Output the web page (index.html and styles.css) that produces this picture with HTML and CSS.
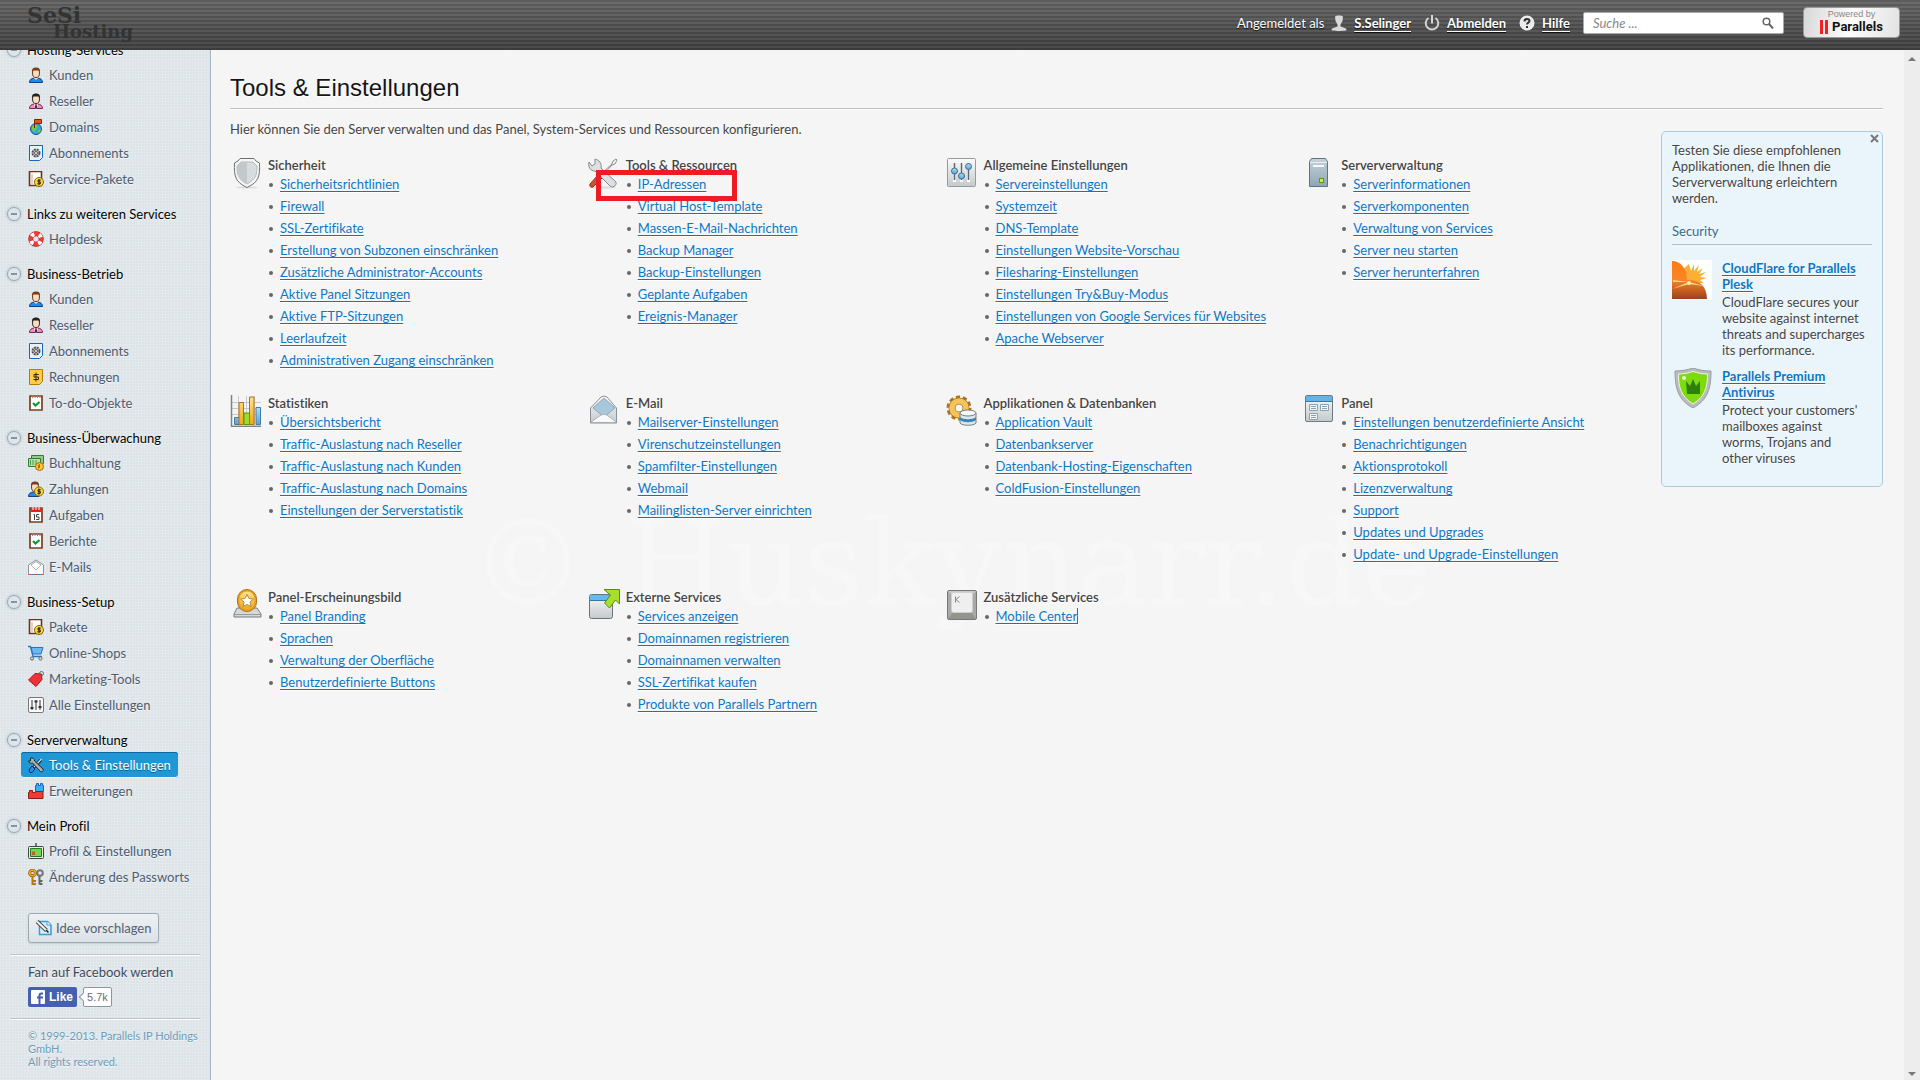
FILE: index.html
```html
<!DOCTYPE html>
<html lang="de">
<head>
    <meta charset="UTF-8">
    <meta name="viewport" content="width=device-width, initial-scale=1.0">
    <title>Tools &amp; Einstellungen</title>
    <link rel="stylesheet" href="styles.css">
</head>
<body>
    <!-- icon set -->
    <svg class="sprite" aria-hidden="true">
        <defs>
            <linearGradient id="silver" x1="0" y1="0" x2="0" y2="1"><stop offset="0" stop-color="#fbfbfb"/><stop offset="1" stop-color="#c3c9cc"/></linearGradient>
            <linearGradient id="gold" x1="0" y1="0" x2="0" y2="1"><stop offset="0" stop-color="#ffe28a"/><stop offset="1" stop-color="#f0a818"/></linearGradient>
            <linearGradient id="sky" x1="0" y1="0" x2="0" y2="1"><stop offset="0" stop-color="#b9ddf2"/><stop offset="1" stop-color="#5aa3cf"/></linearGradient>
            <linearGradient id="orange" x1="0" y1="0" x2="0" y2="1"><stop offset="0" stop-color="#ff7a10"/><stop offset="0.5" stop-color="#f9852a"/><stop offset="1" stop-color="#9c3f1c"/></linearGradient>
            <linearGradient id="steel" x1="0" y1="0" x2="0" y2="1"><stop offset="0" stop-color="#c5d3dc"/><stop offset="1" stop-color="#8fa5b5"/></linearGradient>
        </defs>
        <symbol id="user" viewBox="0 0 16 16">
            <path d="M1.5 15.5c0-3 2-4 4.500-4.500h4c2.500.5 4.500 1.500 4.500 4.500z" fill="#1c8cf0" stroke="#0b3f86"/>
            <path d="M6 9h4v2.500L8 13l-2-1.500z" fill="#f3c9a4"/>
            <ellipse cx="8" cy="6" rx="3.500" ry="4.500" fill="#fbdcc0" stroke="#6b3a1c"/>
            <path d="M4 5.500C3.500 1 6 .5 8 .5s4.500.5 4 5L11 3.500H5z" fill="#7a3d18"/>
        </symbol>
        <symbol id="reseller" viewBox="0 0 16 16">
            <path d="M1.500 15.500c0-3 2-4 4.500-4.500h4c2.500.5 4.500 1.500 4.500 4.500z" fill="#f48cc0" stroke="#7a2455"/>
            <path d="M6 9.500h4L9 15.500H7z" fill="#fff"/><path d="M7.500 11h1l.8 4.500H6.700z" fill="#3b2b33"/>
            <ellipse cx="8" cy="6" rx="3.500" ry="4.500" fill="#fbdcc0" stroke="#3a2a28"/>
            <path d="M4 5.500C3.500 1 6 .5 8 .5s4.500.5 4 5L11 3.500H5z" fill="#222"/>
        </symbol>
        <symbol id="globe" viewBox="0 0 16 16">
            <circle cx="8" cy="10" r="5.500" fill="#35a5e8" stroke="#1f4f92"/>
            <path d="M4 7l4-1.500L10 8l-2 2-1 3-3-2zM10 11l3-1-1 3-2 1z" fill="#6bcc3c"/>
            <path d="M6.500 9V.5h7v4h-7" fill="#e2541b" stroke="#7a2408"/>
        </symbol>
        <symbol id="subscription" viewBox="0 0 16 16">
            <path d="M1.500 .5h13v12l-3 3h-10z" fill="#e8f2fb" stroke="#1466c0"/>
            <circle cx="8" cy="8" r="3.500" fill="#ccc" stroke="#555" stroke-width="2" stroke-dasharray="2 .8"/>
            <circle cx="8" cy="8" r="1.500" fill="#fff" stroke="#555"/>
        </symbol>
        <symbol id="package" viewBox="0 0 16 16">
            <path d="M1.500 .5h12v14h-12z" fill="#fff" stroke="#6b3414" stroke-width="1.600"/>
            <path d="M4 3v10" stroke="#cfa78c"/>
            <circle cx="11" cy="11" r="4.500" fill="#ffd93b" stroke="#8a6208"/>
            <path d="M12.800 9.200H10v1.700h2.300v1.900H9.300M11 8v6.200" fill="none" stroke="#222"/>
        </symbol>
        <symbol id="help-ring" viewBox="0 0 16 16">
            <circle cx="8" cy="8" r="5.200" fill="none" stroke="#8b2323" stroke-width="5"/>
            <circle cx="8" cy="8" r="5.200" fill="none" stroke="#f33a34" stroke-width="4"/>
            <circle cx="8" cy="8" r="5.200" fill="none" stroke="#fff" stroke-width="4" stroke-dasharray="3.200 4.970" stroke-dashoffset="-2.500"/>
        </symbol>
        <symbol id="invoice" viewBox="0 0 16 16">
            <path d="M1.500 .5h13v12l-3 3h-10z" fill="#ffcb4a" stroke="#b97a0c"/>
            <path d="M10.800 5.500H6v2.500h4.500v2.500H5.500M8 3.500v9" fill="none" stroke="#3b2400"/>
        </symbol>
        <symbol id="todo" viewBox="0 0 16 16">
            <path d="M2 1h12v14H2z" fill="#fff" stroke="#7a3f20" stroke-width="1.700"/>
            <path d="M4.500 0v3m2.500-3v3m2.500-3v3M12 0v3" stroke="#a07a64"/>
            <path d="M5 8l2.500 2.500L11.500 7" fill="none" stroke="#0b9a31" stroke-width="2.200"/>
        </symbol>
        <symbol id="money" viewBox="0 0 16 16">
            <path d="M3.500 .5h12v8h-12z" fill="#8fcb86" stroke="#2e7d32"/><path d="M.5 3.500h12v8H.5z" fill="#b5e0a6" stroke="#2e7d32"/>
            <path d="M5 5v5m3-5v5M2.500 5v5" stroke="#4b9a4c"/>
            <circle cx="11.500" cy="11.500" r="4" fill="#ffc933" stroke="#b3600a"/><path d="M10.500 13.500V10l1-.8V13" stroke="#c46810" fill="none"/>
        </symbol>
        <symbol id="payer" viewBox="0 0 16 16">
            <path d="M.5 15.500c0-3 2-4 4.500-4.500h4l2 4.500z" fill="#1c8cf0" stroke="#0b3f86"/>
            <ellipse cx="7" cy="6" rx="3.500" ry="4.500" fill="#fbdcc0" stroke="#6b3a1c"/>
            <path d="M3 5.500C2.500 1 5 .5 7 .5s4.500.5 4 5L10 3.500H4z" fill="#7a3d18"/>
            <circle cx="11" cy="10.500" r="4.500" fill="#ffd93b" stroke="#8a6208"/>
            <path d="M12.800 8.700H10v1.700h2.300v1.900H9.300M11 7.500v6.200" fill="none" stroke="#222"/>
        </symbol>
        <symbol id="calendar" viewBox="0 0 16 16">
            <path d="M2 1h12v14H2z" fill="#fff" stroke="#7a3f20" stroke-width="1.700"/>
            <path d="M2.800 1.500h10.400v3.500H2.800z" fill="#ef1d1d"/>
            <path d="M5 0v3m3-3v3m3-3v3" stroke="#fff"/>
            <path d="M5.500 7.500h1V13M11 7.500H8.500V10H11v2.500H8.200" fill="none" stroke="#444"/>
        </symbol>
        <symbol id="mail" viewBox="0 0 16 16">
            <path d="M.5 6L8 1l7.500 5v9.500H.5z" fill="#fbfbfb" stroke="#8b939c"/>
            <path d="M3 6l5-3.500L13 6l-5 5z" fill="#fff" stroke="#aab0b6"/>
            <path d="M.5 15.500h15" stroke="#d84c4c" stroke-dasharray="3 3"/><path d="M3.500 15.500h12" stroke="#3d79c8" stroke-dasharray="3 3"/>
        </symbol>
        <symbol id="cart" viewBox="0 0 16 16">
            <path d="M3 2.500h12L13 9H4.500z" fill="#67b9f2" stroke="#2273c2"/>
            <path d="M0 1.500h2.500L5 11.500h9" fill="none" stroke="#2a76bd" stroke-width="1.300"/>
            <circle cx="4" cy="13.500" r="1.600" fill="#ddd" stroke="#666"/><circle cx="12.500" cy="13.500" r="1.600" fill="#ddd" stroke="#666"/>
        </symbol>
        <symbol id="tag" viewBox="0 0 16 16">
            <path d="M.5 9L7 2.500l6.500.5.5 5.500L8 15.500z" fill="#ee3338" stroke="#a8181f"/>
            <circle cx="13.500" cy="2.500" r="2" fill="none" stroke="#666"/>
        </symbol>
        <symbol id="sliders" viewBox="0 0 16 16">
            <rect x=".5" y=".5" width="15" height="15" rx="1.500" fill="#fafafa" stroke="#777"/>
            <path d="M4 3v10M8 3v10M12 3v10" stroke="#333"/>
            <path d="M2.500 11h3M6.500 4.500h3M10.500 10h3" stroke="#333" stroke-width="2"/>
        </symbol>
        <symbol id="tools" viewBox="0 0 16 16">
            <path d="M5 11L13 3" stroke="#123" stroke-width="3"/><path d="M6 10L13.500 2" stroke="#dfe6ea" stroke-width="1.200"/>
            <path d="M1 13l3-4 3 3-3 3.500H2z" fill="#2b8af0" stroke="#0b2b5c"/>
            <path d="M2.500 1v3H.5C1 6 3 7 4.500 6L12 14c1.500 2 4 0 3-2L6.500 4C7 2 5 .5 2.500 1z" fill="#a9b0b6" stroke="#1d2a33"/>
        </symbol>
        <symbol id="bricks" viewBox="0 0 16 16">
            <path d="M7.500 8.500v-6h1v-2h2v2h2v-2h2v2h1v6z" fill="#35b1f5" stroke="#1568b8"/>
            <path d="M.5 15.500v-6h1v-2h3v2h3v-1H15v7z" fill="#ef3b35" stroke="#941a18"/>
        </symbol>
        <symbol id="profile" viewBox="0 0 16 16">
            <path d="M7 0h2v4H7z" fill="#777"/><rect x=".5" y="3.500" width="15" height="12" rx="1" fill="#e9efe6" stroke="#444"/>
            <path d="M2.500 5.500h11v8h-11z" fill="#74d74d" stroke="#237a1e"/><path d="M4 12V8.500h3V12z" fill="#c45a37"/>
        </symbol>
        <symbol id="keys" viewBox="0 0 16 16">
            <circle cx="12" cy="4" r="2.800" fill="none" stroke="#777" stroke-width="2"/><path d="M11.500 7v8.500M11.500 12h3m-3 3h3" stroke="#666" stroke-width="2"/>
            <circle cx="4.500" cy="4" r="2.800" fill="none" stroke="#8a5208" stroke-width="3"/><circle cx="4.500" cy="4" r="2.800" fill="none" stroke="#e9a623" stroke-width="1.800"/>
            <path d="M4.500 7v9M5 12h3M5 15h3" stroke="#b8770f" stroke-width="2"/>
        </symbol>
        <symbol id="idea" viewBox="0 0 16 16">
            <path d="M3.500 1.500h8l3.500 3.500v9.500H3.500z" fill="#d7efff" stroke="#3b9bd4" stroke-width="1.500"/><path d="M11 1.500V5h4" fill="#fff" stroke="#3b9bd4"/>
            <path d="M1 1.500l9.500 9" stroke="#444" stroke-width="4"/><path d="M1 1.500l9.500 9" stroke="#eee" stroke-width="2.200"/><path d="M10 10l2.500 2.500" stroke="#222" stroke-width="1.500"/>
        </symbol>
        <symbol id="shield" viewBox="0 0 32 32">
            <ellipse cx="17" cy="30.500" rx="11" ry="1" fill="#ddd"/>
            <path d="M17 1.500h7l2 2.500 3.500 2C30 19 29 25 17 30.500 5 25 4 19 4.500 6L8 4l2-2.500z" fill="#f4f6f6" stroke="#6d7172"/>
            <path d="M17 5h6l4 4c0 9-1 13-10 18C8 22 7 18 7 9l4-4z" fill="#d8dcdd" stroke="#b5babb"/><path d="M17 5v22C8 22 7 18 7 9l4-4z" fill="#c3c8ca"/>
        </symbol>
        <symbol id="big-tools" viewBox="0 0 32 32">
            <ellipse cx="15" cy="30.500" rx="13" ry="1" fill="#ddd"/>
            <path d="M12 18L24 7l1-3 3-2 1 1-2 4-3 1L13 20z" fill="#f5f5f5" stroke="#8a8f91"/>
            <path d="M2 27l8-9 4 3-9 9c-2 1-4-1-3-3z" fill="#c85430" stroke="#8b3419"/>
            <path d="M7 2v5l-3 2-3-4c-1 5 1 9 6 9l14 14c3 4 8 1 7-3L13 11c1-5-2-8-6-9z" fill="#dce0e2" stroke="#858b8e"/>
        </symbol>
        <symbol id="mixer" viewBox="0 0 32 32">
            <rect x="1.500" y="1.500" width="28" height="28" rx="1" fill="url(#silver)" stroke="#969b9e"/>
            <path d="M8.500 6v19M15.500 6v19M22.500 6v19" stroke="#fff" stroke-width="3"/><path d="M8.500 6v17M15.500 6v17M22.500 6v17" stroke="#5d646a" stroke-width="1.600"/>
            <circle cx="8.500" cy="14" r="3" fill="url(#sky)" stroke="#3a6f94"/><circle cx="15.500" cy="19" r="3" fill="url(#sky)" stroke="#3a6f94"/><circle cx="22.500" cy="9.500" r="3" fill="url(#sky)" stroke="#3a6f94"/>
        </symbol>
        <symbol id="server" viewBox="0 0 32 32">
            <path d="M6.500 4.500l2-3h14l2 3v25h-18z" fill="url(#steel)" stroke="#5d7485"/><path d="M7 5.500h17" stroke="#e9f0f4"/>
            <path d="M10 9h11" stroke="#f6fafc" stroke-width="2"/><rect x="16.500" y="21.500" width="4" height="4" fill="#c8f24a" stroke="#5b9c0c"/>
        </symbol>
        <symbol id="chart" viewBox="0 0 32 32">
            <path d="M1.500 1v30H31M1 7.500h30M1 13.500h30M1 19.500h30M8.500 1v30M16.500 1v30M24.500 1v30" fill="none" stroke="#c4c9cc"/><path d="M1.500 0v31.500H31" fill="none" stroke="#7d8488" stroke-width="1.500"/>
            <path d="M4.500 22.500h5v7h-5zM26 12.500h4.500v17H26z" fill="url(#sky)" stroke="#3d7fa8"/><path d="M14 18h6v11.500h-6z" fill="#9bdc2c" stroke="#5c9415"/>
            <path d="M9 7.500h4.500v22H9zM19.500 2H24v27.500h-4.500z" fill="url(#gold)" stroke="#b5701a"/>
        </symbol>
        <symbol id="big-mail" viewBox="0 0 32 32">
            <path d="M2.500 13L13 2q3-2 6 0l9.500 11v15h-26z" fill="url(#silver)" stroke="#8b9196"/>
            <path d="M5 13L16 3l11 10-11 9z" fill="#a9c7db" stroke="#87a8bf"/><path d="M3 27l10-7q3-1.500 6 0l9 7" fill="#f9f9f9" stroke="#aab0b4"/>
        </symbol>
        <symbol id="gear-db" viewBox="0 0 32 32">
            <circle cx="13" cy="13" r="10.500" fill="none" stroke="#a77420" stroke-width="4" stroke-dasharray="4 2.600"/>
            <circle cx="13" cy="13" r="7" fill="none" stroke="#a77420" stroke-width="7"/><circle cx="13" cy="13" r="7" fill="none" stroke="#f3c35c" stroke-width="5.500"/>
            <path d="M14 18v10c2 3 14 3 16 0V18z" fill="#dfe6ea" stroke="#767f86"/><path d="M14 22c3 3 13 3 16 0v3c-3 3-13 3-16 0z" fill="#3c86b5"/>
            <ellipse cx="22" cy="18" rx="8" ry="3" fill="#f5f7f8" stroke="#767f86"/>
        </symbol>
        <symbol id="panel" viewBox="0 0 32 32">
            <rect x="2.500" y=".5" width="27" height="26" rx="1.500" fill="url(#silver)" stroke="#697a85"/><path d="M3 1h26v5H3z" fill="#62b4e8"/><path d="M3 6.500h26" stroke="#357ca8"/>
            <path d="M6.500 9.500h8v6h-8zM17.500 9.500h8v6h-8zM6.500 18.500h8v6h-8z" fill="#f2f6f8" stroke="#8ca1ad"/><path d="M8 11.500h5m-5 2h5m6-2h5m-5 2h5m-16 7h5m-5 2h5" stroke="#8ca1ad"/>
        </symbol>
        <symbol id="award" viewBox="0 0 32 32">
            <path d="M7 19h20l4 6v3H4v-3z" fill="#d5d8da" stroke="#777d80"/><path d="M4 25.500h27" stroke="#999"/>
            <rect x="7.500" y=".5" width="19" height="22" rx="9.500" fill="#e4a12a" stroke="#ae731b"/><rect x="9.500" y="2.500" width="15" height="18" rx="7.500" fill="url(#gold)"/>
            <path d="M17 5.500l2 4 4.500.5-3.500 3 1 4.500-4-2-4 2 1-4.500-3.500-3 4.500-.5z" fill="#fff" stroke="#b98b3c"/>
        </symbol>
        <symbol id="external" viewBox="0 0 32 32">
            <rect x="1.500" y="5.500" width="23" height="24" rx="2" fill="url(#silver)" stroke="#69757d"/><path d="M2 6h22v5H2z" fill="#66b8ee"/><path d="M2 11.500h22" stroke="#2f78aa"/>
            <path d="M16 .5h15.500V15l-4-4-6 8-5-5 6-8z" fill="#a6e02c" stroke="#5c8a12"/>
        </symbol>
        <symbol id="key" viewBox="0 0 32 32">
            <rect x="1.500" y="1.500" width="29" height="29" rx="1.500" fill="#a9a9a9" stroke="#777"/><path d="M2 2h28l-4 4H6z" fill="#c9c9c9"/><path d="M2 30l5-7h18l5 7z" fill="#94948c"/>
            <rect x="5.500" y="3.500" width="21" height="20" rx="2" fill="#efefef" stroke="#d0d0d0"/><path d="M9.500 7.500v6m4-6l-3.500 3 3.500 3" fill="none" stroke="#888"/>
        </symbol>
    </svg>

    <header class="topbar">
        <div class="logo">
            <span class="logo-main">SeSi</span>
            <span class="logo-sub">Hosting</span>
        </div>
        <div class="account">
            <span>Angemeldet als</span>
            <svg class="icon" viewBox="0 0 16 16"><path d="M4 1.500C5 0 11 0 12 1.500L11.500 6 9.500 9.500v2l5.500 2c1.500 2-.5 2.500-7 2.500S-.5 15.500 1 13.500l5.500-2v-2L4.500 6z" fill="#d9d9d9"/></svg>
            <a href="#">S.Selinger</a>
            <svg class="icon" viewBox="0 0 16 16"><path d="M4.500 3A6.300 6.300 0 1 0 11.500 3M8 0v8.500" fill="none" stroke="#d5d5d5" stroke-width="2"/></svg>
            <a href="#">Abmelden</a>
            <svg class="icon" viewBox="0 0 16 16"><circle cx="8" cy="8" r="7.500" fill="#ececec"/><path d="M5.500 6.500c0-3.500 5-3 5-.5 0 1.500-2.500 1.700-2.500 3.500M8 11v2" fill="none" stroke="#333" stroke-width="2"/></svg>
            <a href="#">Hilfe</a>
        </div>
        <form class="search">
            <input type="search" placeholder="Suche ..." aria-label="Suche">
            <button type="button" aria-label="Suchen">
                <svg viewBox="0 0 12 12"><circle cx="4.500" cy="4.500" r="3.300" fill="none" stroke="#666" stroke-width="1.500"/><path d="M7 7l4 4.500" stroke="#666" stroke-width="2"/></svg>
            </button>
        </form>
        <a class="powered" href="#">
            <span class="powered-by">Powered by</span>
            <span class="parallels"><i></i><i></i><b>Parallels</b></span>
        </a>
    </header>

    <div class="page">
        <nav class="sidebar">
            <div class="sidebar-inner">
                <section>
                    <h2><button type="button" aria-label="Einklappen"></button>Hosting-Services</h2>
                    <a href="#"><svg><use href="#user"/></svg>Kunden</a>
                    <a href="#"><svg><use href="#reseller"/></svg>Reseller</a>
                    <a href="#"><svg><use href="#globe"/></svg>Domains</a>
                    <a href="#"><svg><use href="#subscription"/></svg>Abonnements</a>
                    <a href="#"><svg><use href="#package"/></svg>Service-Pakete</a>
                </section>
                <section>
                    <h2><button type="button" aria-label="Einklappen"></button>Links zu weiteren Services</h2>
                    <a href="#"><svg><use href="#help-ring"/></svg>Helpdesk</a>
                </section>
                <section>
                    <h2><button type="button" aria-label="Einklappen"></button>Business-Betrieb</h2>
                    <a href="#"><svg><use href="#user"/></svg>Kunden</a>
                    <a href="#"><svg><use href="#reseller"/></svg>Reseller</a>
                    <a href="#"><svg><use href="#subscription"/></svg>Abonnements</a>
                    <a href="#"><svg><use href="#invoice"/></svg>Rechnungen</a>
                    <a href="#"><svg><use href="#todo"/></svg>To-do-Objekte</a>
                </section>
                <section>
                    <h2><button type="button" aria-label="Einklappen"></button>Business-Überwachung</h2>
                    <a href="#"><svg><use href="#money"/></svg>Buchhaltung</a>
                    <a href="#"><svg><use href="#payer"/></svg>Zahlungen</a>
                    <a href="#"><svg><use href="#calendar"/></svg>Aufgaben</a>
                    <a href="#"><svg><use href="#todo"/></svg>Berichte</a>
                    <a href="#"><svg><use href="#mail"/></svg>E-Mails</a>
                </section>
                <section>
                    <h2><button type="button" aria-label="Einklappen"></button>Business-Setup</h2>
                    <a href="#"><svg><use href="#package"/></svg>Pakete</a>
                    <a href="#"><svg><use href="#cart"/></svg>Online-Shops</a>
                    <a href="#"><svg><use href="#tag"/></svg>Marketing-Tools</a>
                    <a href="#"><svg><use href="#sliders"/></svg>Alle Einstellungen</a>
                </section>
                <section>
                    <h2><button type="button" aria-label="Einklappen"></button>Serververwaltung</h2>
                    <a href="#" class="active"><svg><use href="#tools"/></svg>Tools &amp; Einstellungen</a>
                    <a href="#"><svg><use href="#bricks"/></svg>Erweiterungen</a>
                </section>
                <section>
                    <h2><button type="button" aria-label="Einklappen"></button>Mein Profil</h2>
                    <a href="#"><svg><use href="#profile"/></svg>Profil &amp; Einstellungen</a>
                    <a href="#"><svg><use href="#keys"/></svg>Änderung des Passworts</a>
                </section>
                <button type="button" class="idea"><svg><use href="#idea"/></svg>Idee vorschlagen</button>
                <div class="facebook">
                    <p>Fan auf Facebook werden</p>
                    <div class="like-row">
                        <button type="button" class="like"><svg viewBox="0 0 14 14"><rect width="14" height="14" rx="1" fill="#fff"/><path d="M8.500 14V5.500q0-2 2-2H12M6 7.500h6" fill="none" stroke="#4560b0" stroke-width="2"/></svg>Like</button>
                        <span class="like-count">5.7k</span>
                    </div>
                </div>
                <p class="copyright">© 1999-2013. Parallels IP Holdings GmbH.<br>All rights reserved.</p>
            </div>
        </nav>

        <main class="content">
            <div class="watermark" aria-hidden="true">© Huskynarr.de</div>
            <h1>Tools &amp; Einstellungen</h1>
            <p class="intro">Hier können Sie den Server verwalten und das Panel, System-Services und Ressourcen konfigurieren.</p>
            <div class="columns">
                <div class="tools-grid">
                    <section class="tool">
                        <svg><use href="#shield"/></svg>
                        <div>
                            <h3>Sicherheit</h3>
                            <ul>
                                <li><a href="#">Sicherheitsrichtlinien</a></li>
                                <li><a href="#">Firewall</a></li>
                                <li><a href="#">SSL-Zertifikate</a></li>
                                <li><a href="#">Erstellung von Subzonen einschränken</a></li>
                                <li><a href="#">Zusätzliche Administrator-Accounts</a></li>
                                <li><a href="#">Aktive Panel Sitzungen</a></li>
                                <li><a href="#">Aktive FTP-Sitzungen</a></li>
                                <li><a href="#">Leerlaufzeit</a></li>
                                <li><a href="#">Administrativen Zugang einschränken</a></li>
                            </ul>
                        </div>
                    </section>
                    <section class="tool">
                        <svg><use href="#big-tools"/></svg>
                        <div>
                            <h3>Tools &amp; Ressourcen</h3>
                            <ul>
                                <li class="marked"><a href="#">IP-Adressen</a></li>
                                <li><a href="#">Virtual Host-Template</a></li>
                                <li><a href="#">Massen-E-Mail-Nachrichten</a></li>
                                <li><a href="#">Backup Manager</a></li>
                                <li><a href="#">Backup-Einstellungen</a></li>
                                <li><a href="#">Geplante Aufgaben</a></li>
                                <li><a href="#">Ereignis-Manager</a></li>
                            </ul>
                        </div>
                    </section>
                    <section class="tool">
                        <svg><use href="#mixer"/></svg>
                        <div>
                            <h3>Allgemeine Einstellungen</h3>
                            <ul>
                                <li><a href="#">Servereinstellungen</a></li>
                                <li><a href="#">Systemzeit</a></li>
                                <li><a href="#">DNS-Template</a></li>
                                <li><a href="#">Einstellungen Website-Vorschau</a></li>
                                <li><a href="#">Filesharing-Einstellungen</a></li>
                                <li><a href="#">Einstellungen Try&amp;Buy-Modus</a></li>
                                <li><a href="#">Einstellungen von Google Services für Websites</a></li>
                                <li><a href="#">Apache Webserver</a></li>
                            </ul>
                        </div>
                    </section>
                    <section class="tool">
                        <svg><use href="#server"/></svg>
                        <div>
                            <h3>Serververwaltung</h3>
                            <ul>
                                <li><a href="#">Serverinformationen</a></li>
                                <li><a href="#">Serverkomponenten</a></li>
                                <li><a href="#">Verwaltung von Services</a></li>
                                <li><a href="#">Server neu starten</a></li>
                                <li><a href="#">Server herunterfahren</a></li>
                            </ul>
                        </div>
                    </section>
                    <section class="tool">
                        <svg><use href="#chart"/></svg>
                        <div>
                            <h3>Statistiken</h3>
                            <ul>
                                <li><a href="#">Übersichtsbericht</a></li>
                                <li><a href="#">Traffic-Auslastung nach Reseller</a></li>
                                <li><a href="#">Traffic-Auslastung nach Kunden</a></li>
                                <li><a href="#">Traffic-Auslastung nach Domains</a></li>
                                <li><a href="#">Einstellungen der Serverstatistik</a></li>
                            </ul>
                        </div>
                    </section>
                    <section class="tool">
                        <svg><use href="#big-mail"/></svg>
                        <div>
                            <h3>E-Mail</h3>
                            <ul>
                                <li><a href="#">Mailserver-Einstellungen</a></li>
                                <li><a href="#">Virenschutzeinstellungen</a></li>
                                <li><a href="#">Spamfilter-Einstellungen</a></li>
                                <li><a href="#">Webmail</a></li>
                                <li><a href="#">Mailinglisten-Server einrichten</a></li>
                            </ul>
                        </div>
                    </section>
                    <section class="tool">
                        <svg><use href="#gear-db"/></svg>
                        <div>
                            <h3>Applikationen &amp; Datenbanken</h3>
                            <ul>
                                <li><a href="#">Application Vault</a></li>
                                <li><a href="#">Datenbankserver</a></li>
                                <li><a href="#">Datenbank-Hosting-Eigenschaften</a></li>
                                <li><a href="#">ColdFusion-Einstellungen</a></li>
                            </ul>
                        </div>
                    </section>
                    <section class="tool">
                        <svg><use href="#panel"/></svg>
                        <div>
                            <h3>Panel</h3>
                            <ul>
                                <li><a href="#">Einstellungen benutzerdefinierte Ansicht</a></li>
                                <li><a href="#">Benachrichtigungen</a></li>
                                <li><a href="#">Aktionsprotokoll</a></li>
                                <li><a href="#">Lizenzverwaltung</a></li>
                                <li><a href="#">Support</a></li>
                                <li><a href="#">Updates und Upgrades</a></li>
                                <li><a href="#">Update- und Upgrade-Einstellungen</a></li>
                            </ul>
                        </div>
                    </section>
                    <section class="tool">
                        <svg><use href="#award"/></svg>
                        <div>
                            <h3>Panel-Erscheinungsbild</h3>
                            <ul>
                                <li><a href="#">Panel Branding</a></li>
                                <li><a href="#">Sprachen</a></li>
                                <li><a href="#">Verwaltung der Oberfläche</a></li>
                                <li><a href="#">Benutzerdefinierte Buttons</a></li>
                            </ul>
                        </div>
                    </section>
                    <section class="tool">
                        <svg><use href="#external"/></svg>
                        <div>
                            <h3>Externe Services</h3>
                            <ul>
                                <li><a href="#">Services anzeigen</a></li>
                                <li><a href="#">Domainnamen registrieren</a></li>
                                <li><a href="#">Domainnamen verwalten</a></li>
                                <li><a href="#">SSL-Zertifikat kaufen</a></li>
                                <li><a href="#">Produkte von Parallels Partnern</a></li>
                            </ul>
                        </div>
                    </section>
                    <section class="tool">
                        <svg><use href="#key"/></svg>
                        <div>
                            <h3>Zusätzliche Services</h3>
                            <ul>
                                <li><a href="#" class="caret">Mobile Center</a></li>
                            </ul>
                        </div>
                    </section>
                </div>

                <aside class="promo">
                    <button type="button" class="close" aria-label="Schließen">
                        <svg viewBox="0 0 9 9"><path d="M1 1l7 7M8 1L1 8" stroke="#777" stroke-width="2"/></svg>
                    </button>
                    <p>Testen Sie diese empfohlenen Applikationen, die Ihnen die Serververwaltung erleichtern werden.</p>
                    <h4>Security</h4>
                    <div class="offer">
                        <svg viewBox="0 0 40 40">
                            <path d="M0 0h40v40H0z" fill="#fff"/>
                            <path d="M17 4l2 7 3-7v7l5-6-2 7 6-4-4 6 7-2-6 5 7 1-7 2 4 3H14L10 10z" fill="#fbb034"/>
                            <path d="M0 1c9 0 15 8 15 19 11-1 20 5 20 19H0z" fill="url(#orange)"/>
                            <path d="M0 29l17-7 16 4-16-2zM1 20l16 2-16 0z" fill="#ffd98a"/><circle cx="17" cy="23" r="2" fill="#fff3b0"/>
                        </svg>
                        <div>
                            <a href="#">CloudFlare for Parallels Plesk</a>
                            <p>CloudFlare secures your website against internet threats and supercharges its performance.</p>
                        </div>
                    </div>
                    <div class="offer">
                        <svg viewBox="0 0 40 40">
                            <path d="M3 3c7 0 12-1 18-3 6 2 11 3 18 3 0 17-3 29-18 37C6 32 3 20 3 3z" fill="#b9bcbd" stroke="#9b9e9f"/>
                            <path d="M6.500 6c5 0 10-1 14.500-2.500C25.500 5 30.500 6 35.500 6c0 14-3 23-14.500 30C9.500 29 6.500 20 6.500 6z" fill="#7ddb0d" stroke="#eef5e4"/>
                            <path d="M14 13l4 5 3-7 3 7 4-5v13H15z" fill="#2f7f0c"/><circle cx="12" cy="10" r="2" fill="#efffc9"/>
                        </svg>
                        <div>
                            <a href="#">Parallels Premium Antivirus</a>
                            <p>Protect your customers' mailboxes against worms, Trojans and other&nbsp;viruses</p>
                        </div>
                    </div>
                </aside>
            </div>
        </main>
        <div class="scrollbar" aria-hidden="true"><span class="up"></span><span class="down"></span></div>
    </div>
</body>
</html>
```
FILE: styles.css
```css
*,
*::before,
*::after {
    box-sizing: border-box;
}

body {
    margin: 0;
    height: 100vh;
    display: flex;
    flex-direction: column;
    overflow: hidden;
    background-color: #f5f5f5;
    color: #444;
    font-family: Lato, sans-serif;
    font-size: 13px;
    line-height: 16px;
    font-variant-ligatures: none;
}

h1, h2, h3, h4, p, ul {
    margin: 0;
    padding: 0;
}

button {
    font-family: inherit;
    font-size: inherit;
    cursor: pointer;
}

.sprite {
    position: absolute;
    width: 0;
    height: 0;
}

/* top bar */
.topbar {
    flex: none;
    height: 50px;
    padding: 7px 20px 11px 27px;
    display: flex;
    align-items: flex-start;
    background-image: repeating-linear-gradient(rgba(0, 0, 0, 0.07) 0 2px, rgba(255, 255, 255, 0.06) 2px 4px), linear-gradient(#646464, #3e3e3e);
    color: #fff;
    text-shadow: 0 1px 1px #111;
}

.logo {
    flex: 1;
    display: flex;
    flex-direction: column;
    font-family: "DejaVu Serif", serif;
    font-weight: bold;
    color: #333;
    text-shadow: none;
}

.logo-main {
    font-size: 22px;
    line-height: 16px;
}

.logo-sub {
    padding-left: 26px;
    font-size: 18px;
    line-height: 18px;
}

.account {
    display: flex;
    align-items: center;
    gap: 7px;
    height: 32px;
    margin-right: 13px;
}

.account .icon {
    width: 16px;
    height: 16px;
}

.account a {
    color: #fff;
    font-weight: bold;
    text-underline-offset: 3px;
    margin-right: 6px;
}

.account a:last-child {
    margin-right: 0;
}

.search {
    position: relative;
    width: 201px;
    margin: 5px 19px 0 0;
}

.search input {
    width: 100%;
    height: 22px;
    padding: 0 30px 0 9px;
    border: 1px solid #aaa;
    border-radius: 2px;
    background-color: #fff;
    font-family: inherit;
    font-size: 13px;
    font-style: italic;
}

.search input::placeholder {
    color: #888;
}

.search button {
    position: absolute;
    top: 4px;
    right: 6px;
    width: 16px;
    height: 14px;
    padding: 0;
    border: none;
    background: none;
}

.search svg {
    display: block;
    width: 12px;
    height: 12px;
}

.powered {
    width: 97px;
    height: 31px;
    padding-top: 1px;
    display: flex;
    flex-direction: column;
    align-items: center;
    border: 1px solid #999;
    border-radius: 4px;
    background-image: linear-gradient(100deg, #d8d8d8, #fdfdfd 50%, #e2e2e2);
    color: #888;
    font-family: "Liberation Sans", sans-serif;
    line-height: 10px;
    text-decoration: none;
    text-shadow: none;
}

.powered-by {
    font-size: 9px;
}

.parallels {
    display: flex;
    gap: 2px;
    color: #111;
    font-family: Roboto, sans-serif;
    font-size: 13px;
    line-height: 16px;
}

.parallels i {
    width: 3px;
    height: 14px;
    margin-top: 1px;
    background-color: #e22;
}

.parallels b {
    padding-left: 2px;
}

.page {
    flex: 1;
    min-height: 0;
    display: flex;
}

/* sidebar */
.sidebar {
    flex: none;
    width: 211px;
    overflow: hidden;
    border-right: 1px solid #a5b5c0;
    background-color: #dde4e8;
    background-image: repeating-linear-gradient(rgba(255, 255, 255, 0.15) 0 1px, transparent 1px 3px), repeating-linear-gradient(90deg, rgba(255, 255, 255, 0.15) 0 1px, transparent 1px 3px);
    text-shadow: 0 1px 0 #f4f7f8;
}

/* scrolled a little under the top bar */
.sidebar-inner {
    margin-top: -13px;
}

.sidebar section {
    padding-bottom: 9px;
}

.sidebar h2 {
    display: flex;
    align-items: center;
    gap: 6px;
    height: 25px;
    padding-left: 7px;
    color: #000;
    font-size: 13px;
    font-weight: normal;
}

.sidebar h2 button {
    position: relative;
    width: 14px;
    height: 14px;
    padding: 0;
    border: 1px solid #97aab5;
    border-radius: 50%;
    background-color: #dde5ea;
    box-shadow: 0 0 2px 1px #c5d0d7;
}

.sidebar h2 button::before {
    content: "";
    position: absolute;
    top: 5px;
    left: 3px;
    width: 6px;
    height: 2px;
    background-color: #8696a0;
}

.sidebar section a {
    display: flex;
    align-items: center;
    gap: 5px;
    width: max-content;
    height: 26px;
    margin-left: 21px;
    padding: 0 7px;
    color: #4d5a70;
    text-decoration: none;
}

.sidebar section svg,
.idea svg {
    flex: none;
    width: 16px;
    height: 16px;
}

.sidebar section .active {
    border-radius: 3px;
    background-color: #1e97d4;
    box-shadow: inset 0 1px 0 #0d68a0, inset 0 -1px 0 #fff;
    color: #fff;
    text-shadow: 0 1px 0 #0c5f94;
}

.idea {
    display: flex;
    align-items: center;
    gap: 4px;
    height: 30px;
    margin: 14px 0 11px 28px;
    padding: 0 7px;
    border: 1px solid #9fabb3;
    border-radius: 3px;
    background-image: linear-gradient(#edf1f4, #dbe2e7);
    box-shadow: 0 1px 2px #c5cdd2;
    color: #556070;
}

.facebook {
    margin: 0 10px;
    padding: 9px 0 11px 18px;
    border-top: 1px solid #b9c3ca;
    border-bottom: 1px solid #b9c3ca;
    box-shadow: inset 0 1px 0 #fff, 0 1px 0 #fff;
    color: #3f4a5c;
}

.like-row {
    display: flex;
    gap: 6px;
    margin-top: 7px;
}

.like {
    display: flex;
    align-items: center;
    gap: 4px;
    height: 20px;
    padding: 0 4px 0 3px;
    border: none;
    border-radius: 2px;
    background-color: #4560b0;
    color: #fff;
    font-family: "Liberation Sans", sans-serif;
    font-size: 12px;
    font-weight: bold;
}

.like svg {
    width: 14px;
    height: 14px;
}

.like-count {
    position: relative;
    height: 20px;
    padding: 1px 3px;
    border: 1px solid #8d949e;
    border-radius: 2px;
    background-color: #fff;
    color: #6a7180;
    font-family: "Liberation Sans", sans-serif;
    font-size: 11px;
}

.like-count::before {
    content: "";
    position: absolute;
    top: 6px;
    left: -4px;
    width: 6px;
    height: 6px;
    border: solid #8d949e;
    border-width: 0 0 1px 1px;
    background-color: #fff;
    transform: rotate(45deg);
}

.copyright {
    padding: 10px 12px 0 28px;
    color: #6a9cba;
    font-size: 11px;
    line-height: 13px;
}

/* content */
.content {
    position: relative;
    flex: 1;
    padding: 24px 21px 0 19px;
    text-shadow: 0 1px 0 #fff;
}

.content h1 {
    padding-bottom: 6px;
    border-bottom: 1px solid #c0c0c0;
    box-shadow: 0 1px 0 #fff;
    color: #151515;
    font-family: "Liberation Sans", sans-serif;
    font-size: 24px;
    font-weight: normal;
    line-height: 28px;
}

.intro {
    padding-top: 12px;
}

.columns {
    display: flex;
    align-items: flex-start;
}

.tools-grid {
    flex: 1;
    display: grid;
    grid-template-columns: repeat(4, 1fr);
    row-gap: 24px;
    padding-top: 20px;
}

.tool {
    display: flex;
    gap: 6px;
}

.tool > svg {
    flex: none;
    width: 32px;
    height: 32px;
}

.tool h3 {
    font-size: 13px;
    font-weight: 600;
    line-height: 16px;
}

.tool ul {
    list-style: none;
}

.tool li {
    position: relative;
    padding-left: 12px;
    line-height: 22px;
}

.tool li::before {
    content: "";
    position: absolute;
    top: 10px;
    left: 1px;
    width: 4px;
    height: 4px;
    border-radius: 50%;
    background-color: #666;
}

.tool a,
.offer a {
    color: #0d76c4;
    text-decoration-thickness: 1px;
    text-decoration-skip-ink: none;
    text-underline-offset: 2px;
}

.caret {
    border-right: 1px solid #0d76c4;
}

/* red frame round the first entry */
.marked::after {
    content: "";
    position: absolute;
    top: -3px;
    left: -30px;
    width: 141px;
    height: 31px;
    border: 5px solid #ed1c24;
}

.watermark {
    position: absolute;
    z-index: -1;
    top: 444px;
    left: 258px;
    color: #f7f7f7;
    font-family: "DejaVu Serif", serif;
    font-size: 118px;
    line-height: 138px;
    text-shadow: none;
    white-space: nowrap;
}

.promo {
    position: relative;
    width: 222px;
    margin-top: -6px;
    padding: 10px 10px 20px;
    border: 1px solid #a9cbdc;
    border-radius: 5px;
    background-color: #e9f4fb;
}

.close {
    position: absolute;
    top: 2px;
    right: 3px;
    width: 9px;
    height: 9px;
    padding: 0;
    border: none;
    background: none;
}

.close svg {
    display: block;
}

.promo h4 {
    margin: 17px 0 15px;
    padding-bottom: 5px;
    border-bottom: 1px solid #b9bec2;
    color: #33698c;
    font-size: 13px;
    font-weight: normal;
}

.offer {
    display: flex;
    gap: 10px;
    margin-bottom: 10px;
}

.offer:last-child {
    margin-bottom: 0;
}

.offer svg {
    flex: none;
    width: 40px;
    height: 40px;
}

.offer a {
    font-weight: bold;
}

.offer p {
    padding: 2px 6px 0 0;
}

.scrollbar {
    width: 16px;
    padding: 7px 4px 4px;
    display: flex;
    flex-direction: column;
    justify-content: space-between;
    background-color: #ededed;
}

.scrollbar span {
    width: 0;
    border: 4px solid transparent;
}

.scrollbar .up {
    border-top: none;
    border-bottom-color: #777;
}

.scrollbar .down {
    border-bottom: none;
    border-top-color: #777;
}
```
